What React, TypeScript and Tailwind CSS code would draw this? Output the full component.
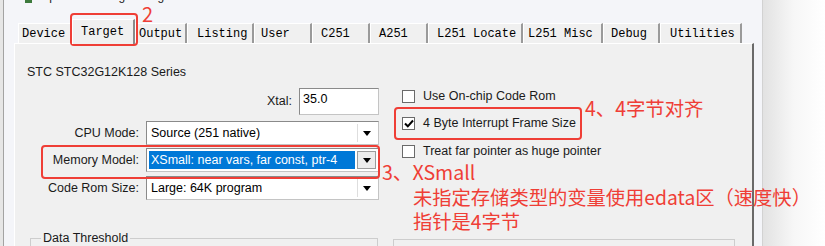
import React from 'react';

type Tab = { label: string; w: string; pl: string; active?: boolean };

const TABS: Tab[] = [
  { label: 'Device', w: 'w-[54px]', pl: 'pl-[3px]' },
  { label: 'Target', w: 'w-[63px]', pl: 'pl-[8px]', active: true },
  { label: 'Output', w: 'w-[52px]', pl: 'pl-[3px]' },
  { label: 'Listing', w: 'w-[67px]', pl: 'pl-[9px]' },
  { label: 'User', w: 'w-[58px]', pl: 'pl-[6px]' },
  { label: 'C251', w: 'w-[58px]', pl: 'pl-[8px]' },
  { label: 'A251', w: 'w-[58px]', pl: 'pl-[8px]' },
  { label: 'L251 Locate', w: 'w-[95px]', pl: 'pl-[8px]' },
  { label: 'L251 Misc', w: 'w-[80px]', pl: 'pl-[4px]' },
  { label: 'Debug', w: 'w-[57px]', pl: 'pl-[7px]' },
  { label: 'Utilities', w: 'w-[82px]', pl: 'pl-[9px]' },
];

function Arrow() {
  return (
    <svg width="8" height="5" viewBox="0 0 8 5">
      <polygon points="0,0 8,0 4,5" fill="#000" />
    </svg>
  );
}

function Select({ value, selected }: { value: string; selected?: boolean }) {
  return (
    <div className="flex h-[24px] w-[233px] items-stretch border border-[#8a8a8a] border-b-[#c4c4c4] border-r-[#c4c4c4] bg-white p-[2px]">
      <div
        className={
          selected
            ? 'flex flex-1 items-center bg-[#0078d7] pl-[2px] pt-[1px] text-white'
            : 'flex flex-1 items-center pl-[2px] pt-[1px] text-black'
        }
      >
        {value}
      </div>
      <div
        className={
          selected
            ? 'ml-[2px] flex w-[19px] items-center justify-center border border-[#9c9c9c] bg-[#ececec]'
            : 'ml-[2px] flex w-[19px] items-center justify-center border-l border-[#dedede] bg-white'
        }
      >
        <Arrow />
      </div>
    </div>
  );
}

function Row({ label, mt, children }: { label: string; mt: string; children: React.ReactNode }) {
  return (
    <div className={`flex items-center justify-end gap-[7px] ${mt}`}>
      <span className="leading-[15px] text-[#1a1a1a]">{label}</span>
      {children}
    </div>
  );
}

function Check({ label, checked, mt }: { label: string; checked?: boolean; mt: string }) {
  return (
    <div className={`flex h-[14px] items-center gap-[8px] ${mt}`}>
      <div className="flex h-[13px] w-[13px] items-center justify-center border border-[#6a6a6a] bg-white">
        {checked && (
          <svg width="10" height="9" viewBox="0 0 10 9">
            <path d="M1 4.5 L3.8 7.3 L9 1.5" fill="none" stroke="#000" strokeWidth="2" />
          </svg>
        )}
      </div>
      <span className="leading-[15px] text-[#1a1a1a]">{label}</span>
    </div>
  );
}

export default function App() {
  const red = 'text-[#ef3e36]';
  const cjk = "font-['Noto_Sans_CJK_SC','Noto_Sans',sans-serif]";
  return (
    <div className="relative flex h-[246px] w-[825px] overflow-hidden bg-[#f4f5f9] font-['Liberation_Sans',Arial,sans-serif] text-[12.5px]">
      <div className="w-[3px] shrink-0 bg-[#e6e6e6]" />
      <div className="w-px shrink-0 bg-[#a3a3a3]" />

      {/* dialog */}
      <div className="flex w-[758px] shrink-0 flex-col">
        {/* title bar, mostly cut off */}
        <div className="flex h-[19px] shrink-0 items-start gap-[8px] overflow-hidden pl-[21px]">
          <div className="h-[3px] w-[7px] bg-[#3d7a3d]" />
          <div className="-mt-[11px] leading-[15px] text-[12px] text-[#222]">Options for Target 'Target 1'</div>
        </div>

        {/* tabs */}
        <div className="flex h-[24px] shrink-0 items-end pl-[14px] font-['Liberation_Mono',monospace] text-[12px] text-black">
          {TABS.map((t) => (
            <div
              key={t.label}
              className={
                t.active
                  ? `relative z-10 -mb-px flex h-[25px] items-center border-l border-t border-white border-r-2 border-r-[#8a8a8a] bg-[#f0f0f0] ${t.w} ${t.pl}`
                  : `flex h-[20px] items-center border-l border-t border-white border-r-2 border-r-[#9a9a9a] bg-[#f0f0f0] ${t.w} ${t.pl}`
              }
            >
              {t.label}
            </div>
          ))}
        </div>

        {/* panel */}
        <div className="ml-[10px] flex w-[740px] shrink-0 flex-col border-l border-t border-white border-r-2 border-r-[#6a6a6a] bg-[#f0f0f0] pt-[21px]">
          <div className="flex h-[166px]">
            <div className="ml-[12px] flex w-[352px] flex-col">
              <div className="h-[15px] leading-[15px] text-[#1a1a1a]">STC STC32G12K128 Series</div>
              <Row label="Xtal:" mt="mt-[8px]">
                <div className="h-[27px] w-[80px] border border-[#8a8a8a] border-b-[#c4c4c4] border-r-[#c4c4c4] bg-white pl-[3px] pt-[3px] leading-[15px]">
                  35.0
                </div>
              </Row>
              <Row label="CPU Mode:" mt="mt-[6px]">
                <Select value="Source (251 native)" />
              </Row>
              <Row label="Memory Model:" mt="mt-[3px]">
                <Select value="XSmall: near vars, far const, ptr-4" selected />
              </Row>
              <Row label="Code Rom Size:" mt="mt-[4px]">
                <Select value="Large: 64K program" />
              </Row>
            </div>

            <div className="ml-[23px] flex flex-col">
              <Check label="Use On-chip Code Rom" mt="mt-[24px]" />
              <Check label="4 Byte Interrupt Frame Size" checked mt="mt-[13px]" />
              <Check label="Treat far pointer as huge pointer" mt="mt-[14px]" />
            </div>
          </div>

          <div className="flex items-start">
            <fieldset className="ml-[15px] h-[30px] w-[348px] border border-[#cdcdcd]">
              <legend className="ml-[10px] px-[2px] leading-[15px] text-[#1a1a1a]">Data Threshold</legend>
            </fieldset>
            <div className="ml-[15px] mt-[8px] h-[20px] w-[342px] border border-[#cdcdcd]" />
          </div>
        </div>
      </div>

      <div className="w-px shrink-0 bg-[#d2d2d2]" />
      <div className="flex-1 bg-linear-to-r from-[#e2e2e2] via-[#f7f7f7] to-white" />

      {/* annotations */}
      <div className="absolute left-[70px] top-[13px] h-[33px] w-[68px] rounded-[4px] border-2 border-[#ef3e36]" />
      <div className={`absolute left-[142px] top-[4px] text-[20px] leading-none ${red} ${cjk}`}>2</div>

      <div className="absolute left-[41px] top-[145px] h-[34px] w-[339px] rounded-[4px] border-2 border-[#ef3e36]" />
      <div className="absolute left-[394px] top-[107px] h-[33px] w-[188px] rounded-[4px] border-2 border-[#ef3e36]" />

      <div className={`absolute left-[585px] top-[98px] text-[19.4px] leading-none ${red} ${cjk}`}>4、4字节对齐</div>
      <div className={`absolute left-[382px] top-[162px] text-[19.6px] leading-none ${red} ${cjk}`}>3、XSmall</div>
      <div className={`absolute left-[413px] top-[188px] text-[19.3px] leading-none ${red} ${cjk}`}>
        未指定存储类型的变量使用edata区（速度快）
      </div>
      <div className={`absolute left-[413px] top-[212px] text-[19.3px] leading-none ${red} ${cjk}`}>指针是4字节</div>
    </div>
  );
}
